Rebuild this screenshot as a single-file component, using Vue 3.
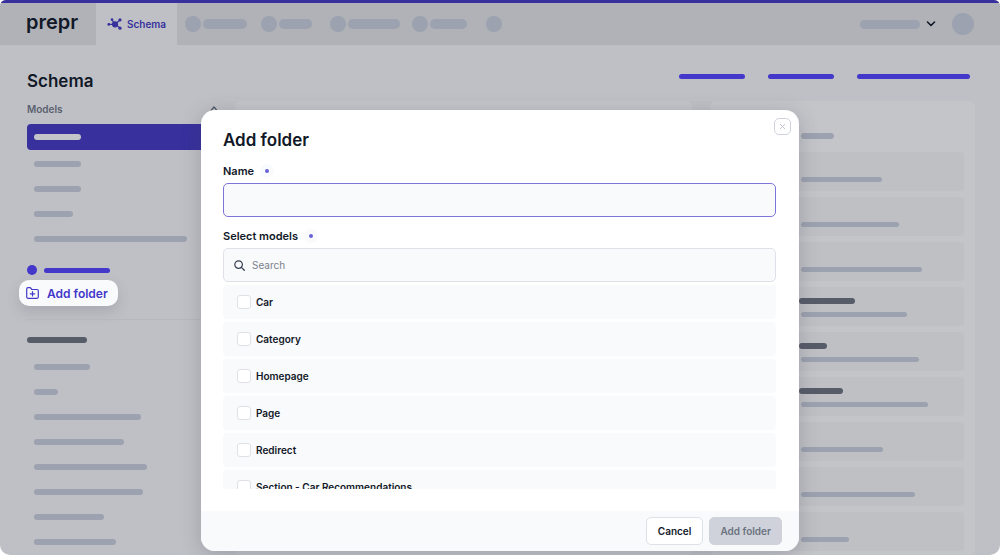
<script setup>
import { ref } from 'vue'

const navItems = [
  { bar: 44, gap: 14 },
  { bar: 33, gap: 18 },
  { bar: 52, gap: 12 },
  { bar: 37, gap: 19 },
  { bar: 0, gap: 0 }
]
const actions = [66, 66, 113]
const modelRows = [47, 47, 39, 153]
const componentRows = [56, 24, 107, 90, 113, 109, 70, 82]
const cards = [
  { line: 81 },
  { line: 98 },
  { line: 121 },
  { line: 106, heading: 54 },
  { line: 118, heading: 26 },
  { line: 127, heading: 42 },
  { line: 82 },
  { line: 114 },
  { line: 48 }
]
const models = ['Car', 'Category', 'Homepage', 'Page', 'Redirect', 'Section - Car Recommendations']

const name = ref('')
const search = ref('')
const selected = ref([])
const px = (n) => ({ width: n + 'px' })
</script>

<template>
  <div class="app">
    <header class="topbar">
      <a class="logo" href="#">prepr</a>
      <a class="tab" href="#">
        <svg width="16" height="14" viewBox="0 0 16 14" aria-hidden="true">
          <g stroke="#37309d" stroke-width="1.2" fill="none">
            <path d="M1.5 7.4H8M8 7.2L5 2.8M8 7.2L13 3M8 7.2L13 11" />
          </g>
          <g fill="#37309d">
            <circle cx="8" cy="7.3" r="3.1" />
            <circle cx="1.8" cy="7.4" r="1.4" />
            <circle cx="5" cy="2.6" r="1.3" />
            <circle cx="13" cy="2.9" r="1.6" />
            <circle cx="13" cy="11.2" r="1.6" />
          </g>
        </svg>
        <span>Schema</span>
      </a>
      <nav class="nav" aria-label="Main">
        <div v-for="(n, i) in navItems" :key="i" class="nav-item" :style="{ marginRight: n.gap + 'px' }">
          <span class="dot"></span>
          <span v-if="n.bar" class="nav-bar" :style="px(n.bar)"></span>
        </div>
      </nav>
      <div class="account">
        <span class="account-name"></span>
        <svg width="10" height="6" viewBox="0 0 10 6" aria-hidden="true">
          <path d="M1.5 1L5 4.5L8.5 1" fill="none" stroke="#111827" stroke-width="1.6" stroke-linecap="round" stroke-linejoin="round" />
        </svg>
        <span class="avatar"></span>
      </div>
    </header>

    <main class="page">
      <div class="heading">
        <h1>Schema</h1>
        <div class="actions">
          <span v-for="(w, i) in actions" :key="i" class="action" :style="px(w)"></span>
        </div>
      </div>

      <div class="columns">
        <aside class="sidebar">
          <div class="group-title">
            <span>Models</span>
            <svg width="8" height="5" viewBox="0 0 8 5" aria-hidden="true">
              <path d="M1 4.5L4 1L7 4.5" fill="none" stroke="#4b5563" stroke-width="1.2" />
            </svg>
          </div>
          <div class="row active"><span class="bar"></span></div>
          <div class="rows">
            <div v-for="(w, i) in modelRows" :key="i" class="row">
              <span class="bar" :style="px(w)"></span>
            </div>
          </div>
          <div class="add-model"><i></i><b></b></div>
          <button class="add-folder" type="button">
            <svg width="13" height="12" viewBox="0 0 13 12" aria-hidden="true">
              <path d="M.7 1.9Q.7.7 1.9.7H4.3L5.9 2.5H11.1Q12.3 2.5 12.3 3.7V10.1Q12.3 11.3 11.1 11.3H1.9Q.7 11.3.7 10.1ZM6.5 4.6V9M4.3 6.8H8.7" fill="none" stroke="#4338ca" stroke-width="1.2" stroke-linejoin="round" stroke-linecap="round" />
            </svg>
            <span>Add folder</span>
          </button>
          <hr />
          <div class="dark section-title"></div>
          <div class="components">
            <div v-for="(w, i) in componentRows" :key="i" class="row">
              <span class="bar" :style="px(w)"></span>
            </div>
          </div>
        </aside>
        <section class="panel"></section>
        <section class="panel side">
          <div class="panel-head"><span class="bar"></span></div>
          <div v-for="(c, i) in cards" :key="i" class="card">
            <span v-if="c.heading" class="dark" :style="px(c.heading)"></span>
            <span class="line" :style="px(c.line)"></span>
          </div>
        </section>
      </div>
    </main>

    <div class="overlay">
      <form class="dialog" role="dialog" aria-labelledby="dialog-title" @submit.prevent>
        <button class="close" type="button" aria-label="Close">
          <svg width="7" height="7" viewBox="0 0 7 7" aria-hidden="true">
            <path d="M1 1L6 6M6 1L1 6" stroke="#c3c7d0" stroke-width="1" />
          </svg>
        </button>
        <div class="body">
          <h2 id="dialog-title">Add folder</h2>
          <div class="label"><label for="name">Name</label><i class="required"></i></div>
          <input id="name" v-model="name" class="field focus" type="text" />
          <div class="label"><label for="search">Select models</label><i class="required"></i></div>
          <div class="field search">
            <svg width="11" height="11" viewBox="0 0 11 11" aria-hidden="true">
              <circle cx="4.6" cy="4.6" r="3.8" fill="none" stroke="#374151" stroke-width="1.2" />
              <path d="M7.4 7.4L10.3 10.3" stroke="#374151" stroke-width="1.3" stroke-linecap="round" />
            </svg>
            <input id="search" v-model="search" type="search" placeholder="Search" />
          </div>
          <div class="list">
            <label v-for="m in models" :key="m" class="option">
              <input v-model="selected" type="checkbox" :value="m" />
              <span>{{ m }}</span>
            </label>
          </div>
        </div>
        <footer class="footer">
          <button class="btn" type="button">Cancel</button>
          <button class="btn primary" type="submit" disabled>Add folder</button>
        </footer>
      </form>
    </div>
  </div>
</template>

<style>
body {
  background: #fff;
}
</style>

<style scoped>
* {
  box-sizing: border-box;
}
.app {
  position: relative;
  height: 100vh;
  overflow: hidden;
  border-radius: 6px 6px 10px 10px;
  background: #bfc0c5;
  color: #111827;
  font-family: Inter, "Liberation Sans", sans-serif;
  font-size: 10px;
}
button,
input {
  font-family: inherit;
  margin: 0;
}
a {
  text-decoration: none;
}
.topbar {
  display: flex;
  height: 45px;
  border-top: 3px solid #37309d;
  background: #b0b2b7;
}
.logo {
  width: 96px;
  padding: 7px 0 0 26px;
  color: #111827;
  font-size: 20px;
  line-height: 24px;
  font-weight: 600;
}
.tab {
  display: flex;
  align-items: center;
  gap: 4px;
  width: 81px;
  padding-left: 11px;
  background: #bfc0c5;
  color: #37309d;
  font-weight: 600;
}
.tab svg {
  flex: none;
}
.nav {
  display: flex;
  align-items: center;
  padding-left: 8px;
}
.nav-item {
  display: flex;
  align-items: center;
  gap: 2px;
}
.dot {
  width: 16px;
  height: 16px;
  border-radius: 50%;
  background: #9ca2af;
}
.nav-bar {
  height: 10px;
  border-radius: 5px;
  background: #9ca2af;
}
.account {
  display: flex;
  align-items: center;
  margin-left: auto;
  padding-right: 26px;
}
.account-name {
  width: 60px;
  height: 9px;
  margin-right: 6px;
  border-radius: 5px;
  background: #9ca2af;
}
.avatar {
  width: 22px;
  height: 22px;
  margin-left: 16px;
  border-radius: 50%;
  background: #9ca2af;
}
.page {
  padding: 24px 25px 0 27px;
}
.heading {
  display: flex;
  justify-content: space-between;
  height: 32px;
  padding-right: 5px;
}
h1 {
  margin: 0;
  font-size: 17px;
  line-height: 24px;
  font-weight: 600;
}
.actions {
  display: flex;
  gap: 23px;
  padding-top: 5px;
}
.action {
  height: 5px;
  border-radius: 3px;
  background: #4338ca;
}
.columns {
  display: grid;
  grid-template-columns: 198px 1fr 283px;
}
.panel {
  margin-left: 10px;
  border-radius: 6px;
  background: #c4c5c9;
}
.group-title {
  display: flex;
  justify-content: space-between;
  align-items: center;
  height: 23px;
  padding: 0 7px 8px 0;
  color: #5b6270;
  font-weight: 600;
}
.row {
  display: flex;
  align-items: center;
  height: 25px;
  padding-left: 7px;
}
.row.active {
  height: 26px;
  border-radius: 4px;
  background: #37309d;
}
.row.active .bar {
  width: 47px;
  background: #c4c5c9;
}
.bar {
  height: 6px;
  border-radius: 3px;
  background: #9ca2af;
}
.rows {
  padding-top: 1px;
}
.add-model {
  display: flex;
  align-items: center;
  gap: 7px;
  height: 10px;
  margin-top: 14px;
}
.add-model i {
  width: 10px;
  height: 10px;
  border-radius: 50%;
  background: #4338ca;
}
.add-model b {
  width: 66px;
  height: 5px;
  border-radius: 3px;
  background: #4338ca;
}
.add-folder {
  display: flex;
  align-items: center;
  gap: 8px;
  height: 26px;
  margin: 5px 0 0 -8px;
  padding: 0 10px 0 7px;
  border: 0;
  border-radius: 10px;
  background: #f9fafc;
  box-shadow: 0 6px 14px rgba(60, 60, 80, 0.16);
  color: #4338ca;
  font-size: 12px;
  font-weight: 600;
}
hr {
  margin: 13px 0 0;
  border: 0;
  border-top: 1px solid #b6b8be;
}
.dark {
  height: 6px;
  border-radius: 3px;
  background: #575c69;
}
.section-title {
  width: 60px;
  margin: 17px 0 11px;
}
.panel.side {
  display: flex;
  flex-direction: column;
  gap: 6px;
  margin-left: 18px;
  padding: 0 11px 4px;
}
.panel-head {
  display: flex;
  align-items: center;
  height: 45px;
  padding: 25px 0 0 80px;
}
.panel-head .bar {
  width: 33px;
}
.card {
  display: flex;
  flex-direction: column;
  justify-content: flex-end;
  gap: 8px;
  height: 39px;
  padding: 0 0 9px 80px;
  border-radius: 4px;
  background: #bfc0c4;
}
.card .dark {
  margin-left: -2px;
  border-left: 2px solid #575c69;
  box-sizing: content-box;
}
.line {
  height: 5px;
  border-radius: 3px;
  background: #9ca2af;
}
.overlay {
  position: absolute;
  inset: 0;
  display: flex;
  justify-content: center;
  align-items: flex-start;
  padding: 110px 16px 0;
}
.dialog {
  position: relative;
  width: 100%;
  max-width: 598px;
  border-radius: 14px;
  background: #fff;
  box-shadow: 0 4px 20px rgba(60, 60, 80, 0.25);
  overflow: hidden;
}
.close {
  position: absolute;
  top: 8px;
  right: 8px;
  display: flex;
  align-items: center;
  justify-content: center;
  width: 17px;
  height: 17px;
  padding: 0;
  border: 1px solid #d0d3db;
  border-radius: 5px;
  background: #fff;
}
.body {
  padding: 18px 23px 22px 22px;
}
h2 {
  margin: 0;
  font-size: 17px;
  line-height: 24px;
  font-weight: 600;
}
.label {
  display: flex;
  align-items: center;
  gap: 6px;
  height: 16px;
  margin: 11px 0 4px;
  font-size: 11px;
  font-weight: 600;
}
.required {
  display: flex;
  align-items: center;
  justify-content: center;
  width: 14px;
  height: 14px;
  border-radius: 50%;
  background: #f9fafc;
}
.required::after {
  content: "";
  width: 4px;
  height: 4px;
  border-radius: 50%;
  background: #6a61d6;
}
.field {
  display: block;
  width: 100%;
  height: 34px;
  border: 1px solid #dfe1e8;
  border-radius: 5px;
  background: #f9fafc;
  outline: none;
}
.field.focus {
  padding: 0 10px;
  border-color: #7d74d9;
}
.search {
  display: flex;
  align-items: center;
  gap: 7px;
  padding: 0 10px;
}
.search input {
  flex: 1;
  padding: 0;
  border: 0;
  outline: none;
  background: transparent;
  font-size: 10px;
}
.search input::placeholder {
  color: #7b818e;
}
.list {
  display: flex;
  flex-direction: column;
  gap: 3px;
  height: 204px;
  margin-top: 3px;
  overflow: hidden;
}
.option {
  display: flex;
  flex: none;
  align-items: center;
  gap: 5px;
  height: 34px;
  padding-left: 14px;
  border-radius: 4px;
  background: #f9fafc;
  font-weight: 600;
}
.option input {
  appearance: none;
  width: 14px;
  height: 14px;
  border: 1px solid #dfe1e6;
  border-radius: 3px;
  background: #fff;
}
.footer {
  display: flex;
  justify-content: flex-end;
  gap: 6px;
  padding: 6px 17px;
  background: #f9fafc;
}
.btn {
  height: 28px;
  padding: 0 11px;
  border: 1px solid #dfe1e8;
  border-radius: 5px;
  background: #fff;
  color: #111827;
  font-size: 10px;
  font-weight: 600;
}
.btn.primary {
  padding: 0 10px;
  border-color: #d0d2db;
  background: #d0d2db;
  color: #6b7280;
}
</style>
